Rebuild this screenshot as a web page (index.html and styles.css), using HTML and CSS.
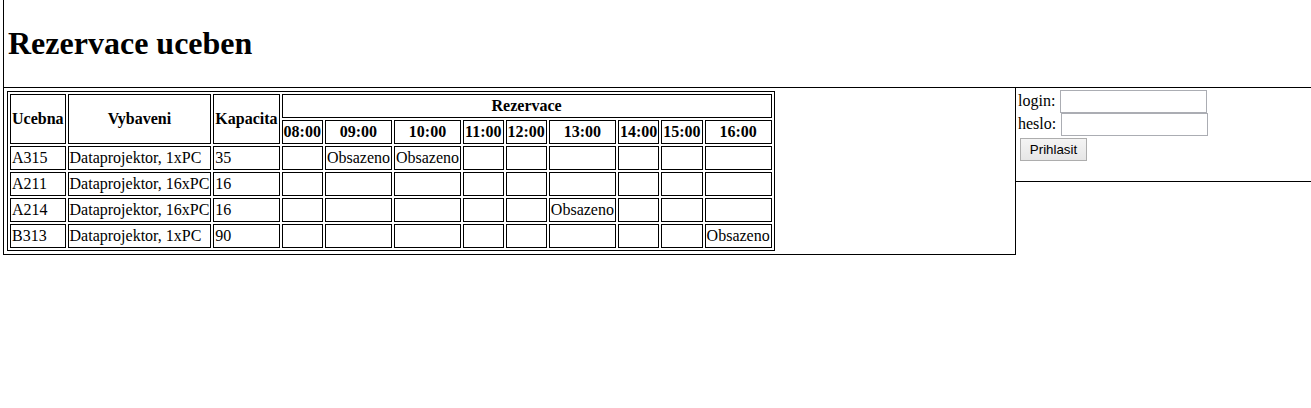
FILE: index.html
```html
<!DOCTYPE html>
<html>
<head>
<meta charset="utf-8">
<title>Rezervace uceben</title>
<link rel="stylesheet" href="styles.css">
</head>
<body>
<div class="header">
  <h1 class="title">Rezervace uceben</h1>
</div>
<div class="main">
  <div class="content">
    <table class="schedule">
      <tr>
        <th rowspan="2">Ucebna</th>
        <th rowspan="2">Vybaveni</th>
        <th rowspan="2">Kapacita</th>
        <th colspan="9">Rezervace</th>
      </tr>
      <tr>
        <th>08:00</th><th>09:00</th><th>10:00</th><th>11:00</th><th>12:00</th><th>13:00</th><th>14:00</th><th>15:00</th><th>16:00</th>
      </tr>
      <tr>
        <td>A315</td><td>Dataprojektor, 1xPC</td><td>35</td>
        <td></td><td>Obsazeno</td><td>Obsazeno</td><td></td><td></td><td></td><td></td><td></td><td></td>
      </tr>
      <tr>
        <td>A211</td><td>Dataprojektor, 16xPC</td><td>16</td>
        <td></td><td></td><td></td><td></td><td></td><td></td><td></td><td></td><td></td>
      </tr>
      <tr>
        <td>A214</td><td>Dataprojektor, 16xPC</td><td>16</td>
        <td></td><td></td><td></td><td></td><td></td><td>Obsazeno</td><td></td><td></td><td></td>
      </tr>
      <tr>
        <td>B313</td><td>Dataprojektor, 1xPC</td><td>90</td>
        <td></td><td></td><td></td><td></td><td></td><td></td><td></td><td></td><td>Obsazeno</td>
      </tr>
    </table>
  </div>
  <div class="login">
    <form class="login-form">
      login: <input class="field" type="text"><br>
      heslo: <input class="field" type="password"><br>
      <button class="btn" type="button">Prihlasit</button>
    </form>
  </div>
</div>
</body>
</html>
```
FILE: styles.css
```css
html, body {
  margin: 0;
  padding: 0;
  background: #fff;
}
body {
  font-family: "Liberation Serif", "Times New Roman", serif;
  font-size: 16px;
  color: #000;
}
.header {
  margin-left: 3px;
  border-left: 1px solid #000;
  border-bottom: 1px solid #000;
  padding: 4px 4px 3px;
}
.title {
  font-size: 32px;
  font-weight: bold;
  margin: 21.44px 0;
}
.main {
  display: flex;
  align-items: flex-start;
  margin-left: 3px;
}
.content {
  box-sizing: border-box;
  width: 1013px;
  flex: none;
  border: 1px solid #000;
  border-top: none;
  padding: 3px;
}
.schedule {
  border: 1px solid #000;
  border-spacing: 2px;
  border-collapse: separate;
}
.schedule th,
.schedule td {
  border: 1px solid #000;
  padding: 2px 1px;
  white-space: nowrap;
}
.schedule td {
  text-align: left;
}
.schedule td:empty {
  height: 18px;
}
.login {
  flex: 1;
  border-bottom: 1px solid #000;
  padding: 2px;
}
.login-form {
  margin: 0 0 16px;
}
.field {
  box-sizing: border-box;
  width: 147px;
  height: 23px;
  margin: 0 0 0 1px;
  padding: 1px 2px;
  border: 1px solid #abadb3;
  font-family: "Liberation Sans", Arial, sans-serif;
  font-size: 13.33px;
  background: #fff;
}
.btn {
  box-sizing: border-box;
  width: 67px;
  height: 23px;
  margin: 2px;
  padding: 0 6px;
  border: 1px solid #adadad;
  background: linear-gradient(#f4f4f4, #e6e6e6);
  font-family: "Liberation Sans", Arial, sans-serif;
  font-size: 13.33px;
  color: #000;
}
```
